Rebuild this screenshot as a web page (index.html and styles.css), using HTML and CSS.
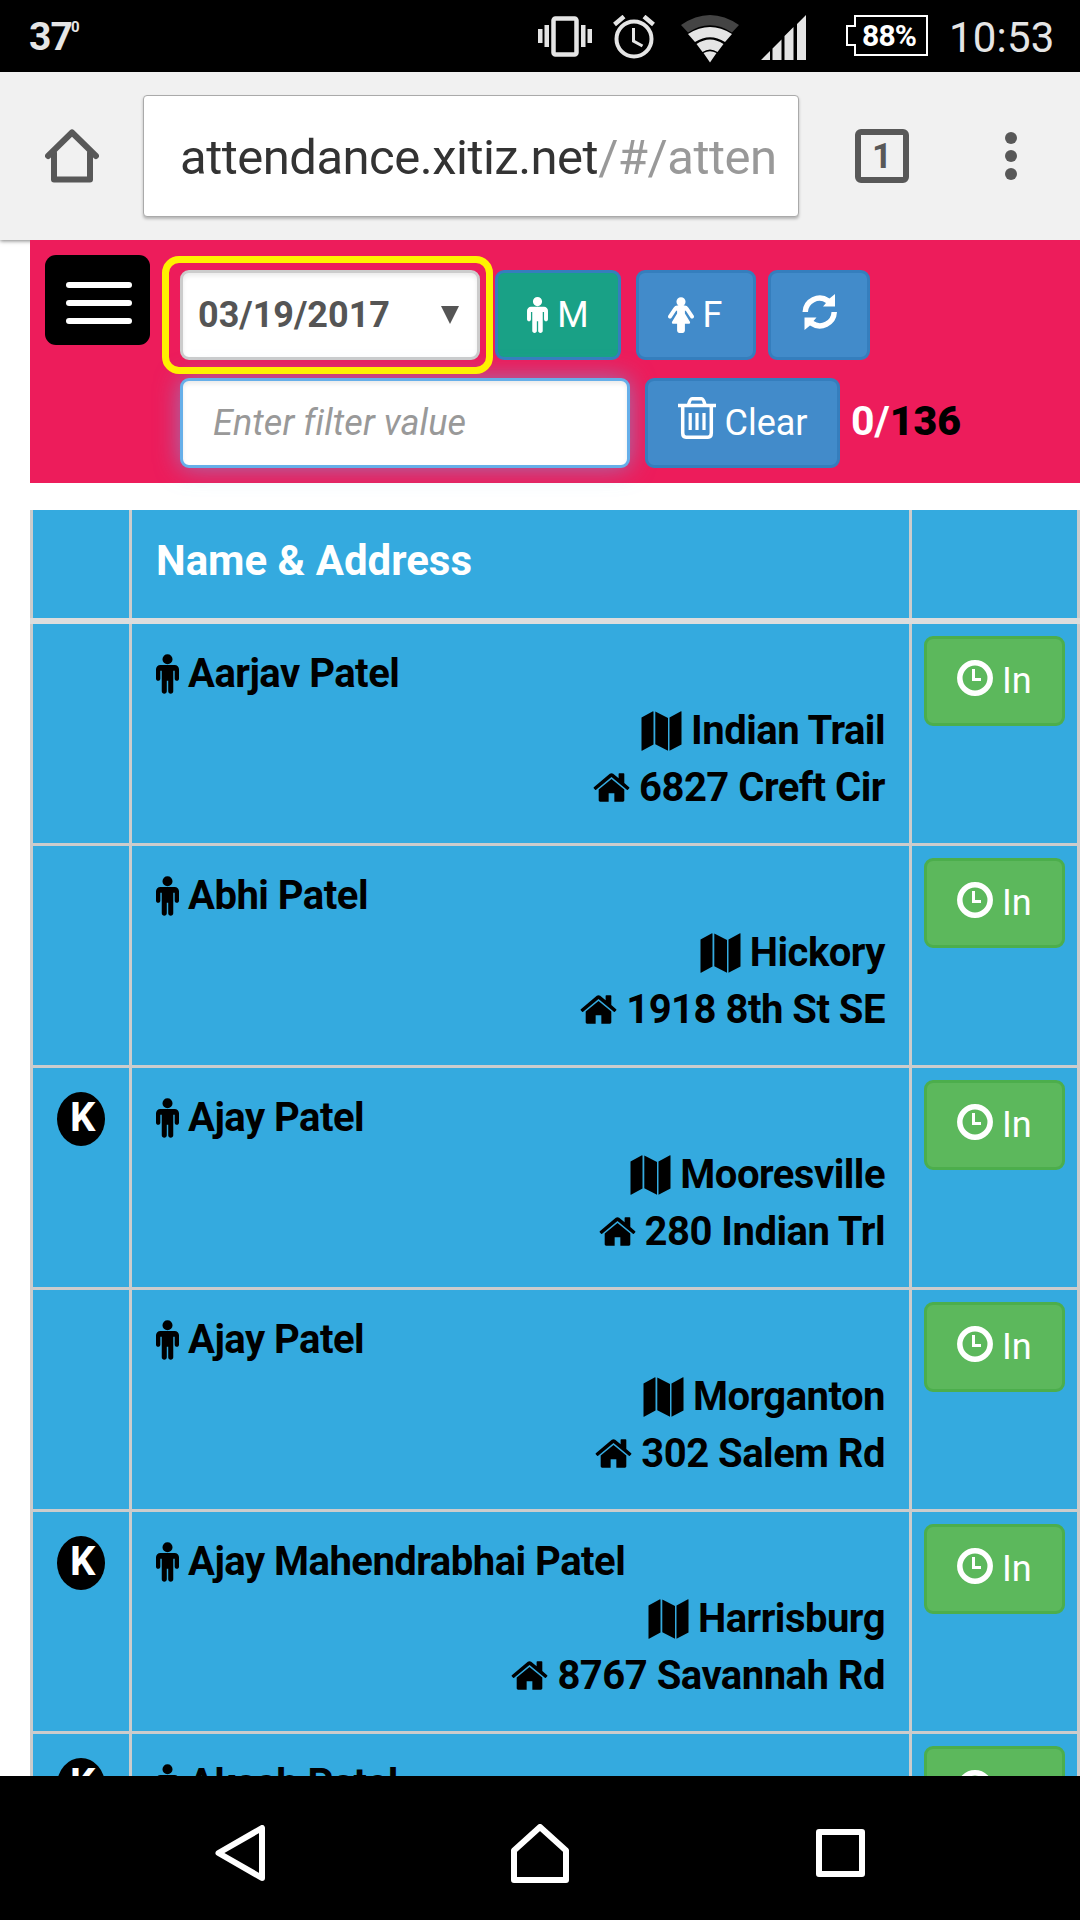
FILE: index.html
```html
<!DOCTYPE html>
<html lang="en">
<head>
<meta charset="utf-8">
<title>Attendance</title>
<link rel="stylesheet" href="styles.css">
</head>
<body>
<svg class="sprite" aria-hidden="true">
  <symbol id="male" viewBox="0 160 1024 1760"><path d="M1024 832v416q0 40-28 68t-68 28-68-28-28-68v-352h-64v912q0 46-33 79t-79 33-79-33-33-79v-464h-64v464q0 46-33 79t-79 33-79-33-33-79v-912h-64v352q0 40-28 68t-68 28-68-28-28-68v-416q0-80 56-136t136-56h640q80 0 136 56t56 136zm-288-448q0 93-65.500 158.500t-158.500 65.500-158.500-65.500-65.500-158.500 65.500-158.500 158.500-65.500 158.500 65.500 65.500 158.500z"/></symbol>
  <symbol id="female" viewBox="0 160 1280 1760"><path d="M1280 1120q0 40-28 68t-68 28q-51 0-80-43l-227-341h-45v132l247 411q9 15 9 33 0 26-19 45t-45 19h-192v336q0 46-33 79t-79 33h-160q-46 0-79-33t-33-79v-336h-192q-26 0-45-19t-19-45q0-18 9-33l247-411v-132h-45l-227 341q-29 43-80 43-40 0-68-28t-28-68q0-29 16-53l256-384q73-107 176-107h384q103 0 176 107l256 384q16 24 16 53zm-416-736q0 93-65.500 158.500t-158.500 65.500-158.500-65.500-65.500-158.500 65.500-158.500 158.500-65.500 158.500 65.500 65.500 158.500z"/></symbol>
  <symbol id="home" viewBox="0 253 1664 1283"><path d="M1408 992v480q0 26-19 45t-45 19h-384v-384h-256v384h-384q-26 0-45-19t-19-45v-480q0-1 .5-3t.5-3l575-474 575 474q1 2 1 6zm223-69l-62 74q-8 9-21 11h-3q-13 0-21-7l-692-577-692 577q-12 8-24 7-13-2-21-11l-62-74q-8-10-7-23.500t11-21.500l719-599q32-26 76-26t76 26l244 204v-195q0-14 9-23t23-9h192q14 0 23 9t9 23v408l219 182q10 8 11 21.500t-7 23.500z"/></symbol>
  <symbol id="map" viewBox="0 0 40 40"><path d="M0 6.500 11.500.3a.4.400 0 0 1 .5.4V33.500L.5 39.800a.4.400 0 0 1-.5-.4zM13.800.5 26.500 7V39.700L13.800 33.300zM28 6.500 39.500.2a.4.400 0 0 1 .5.4V33.500L28 39.800z"/></symbol>
  <symbol id="clock" viewBox="0 0 36 36"><circle cx="18" cy="18" r="15.200" fill="none" stroke="currentColor" stroke-width="5.500"/><path d="M15 9h3v9h6v3h-9z"/></symbol>
</svg>
<div class="screen">
  <header class="status">
    <span class="temp">37</span><span class="degree">0</span>
    <svg class="s-vibrate" width="54" height="42" viewBox="0 0 54 42" fill="#e5e5e5"><rect x="15.500" y="2.500" width="23" height="36" rx="2" fill="none" stroke="#e5e5e5" stroke-width="4.500"/><path d="M0 13h4.500v14H0zM6.500 9h4.500v22H6.500zM43 9h4.500v22H43zM49.500 13H54v14h-4.500z"/></svg>
    <svg class="s-alarm" width="42" height="44" viewBox="0 0 42 44" fill="none" stroke="#e5e5e5"><circle cx="21" cy="24" r="17.500" stroke-width="4"/><path d="M20.500 13v13l9 5" stroke-width="3"/><path d="M1.500 9.500 11 1.500M40.500 9.500 31 1.500" stroke-width="4.500"/></svg>
    <svg class="s-wifi" width="58" height="48" viewBox="0 0 58 48" fill="#e5e5e5"><path fill="#444" d="M0 10Q29-10 58 10L51 17.500Q29 3 7 17.500z"/><path d="M7 19Q29 5 51 19L44 27Q29 17.500 14 27zM15.500 29Q29 20 42.500 29L36.500 37Q29 32 21.500 37zM22.500 38Q29 34.500 35.500 38L29 47.500z"/></svg>
    <svg class="s-signal" width="45" height="45" viewBox="0 0 45 45" fill="#e5e5e5"><path d="M0 45 9 36v9zM11.500 33.500 20.500 24.500V45h-9zM23.500 21 32.500 12V45h-9zM36 9 45 0v45h-9z"/></svg>
    <span class="battery"><svg width="82" height="42" viewBox="0 0 82 42" fill="none" stroke="#fff" stroke-width="2"><path d="M9 1h72v39H9V30H1V11h8z"/></svg><b>88%</b></span>
    <span class="time">10:53</span>
  </header>

  <nav class="browser">
    <svg width="54" height="54" viewBox="0 0 54 54" fill="none" stroke="#585858" stroke-width="6" stroke-linejoin="round" stroke-linecap="round"><path d="M9 24V50.500H45V24"/><path d="M3 27 27 3.500 51 27"/></svg>
    <div class="url"><span class="url-text">attendance.xitiz.net<i>/#/atten</i></span></div>
    <span class="tabs">1</span>
    <span class="dots"><i></i><i></i><i></i></span>
  </nav>

  <main class="page">
    <section class="toolbar">
      <button class="menu"><i></i><i></i><i></i></button>
      <div class="controls">
        <div class="line">
          <div class="date"><span>03/19/2017</span><svg width="18" height="18" viewBox="0 0 18 18"><path d="M0 0h18L9 18z" fill="#555"/></svg></div>
          <button class="btn male"><svg width="21" height="36" class="icon"><use href="#male"/></svg>M</button>
          <button class="btn female"><svg width="26" height="36" class="icon"><use href="#female"/></svg>F</button>
          <button class="btn refresh"><svg width="36" height="36" viewBox="0 0 36 36" class="icon"><path d="M.5 18A17.300 17.300 0 0 1 27.500 4.500L33 0V12.500H21L24 9A11.500 11.500 0 0 0 6 18zM35 18A17.300 17.300 0 0 1 8 31.500L2.500 36V23.500H14.500L11.500 27A11.500 11.500 0 0 0 29.500 18z"/></svg></button>
        </div>
        <div class="line">
          <div class="filter">Enter filter value</div>
          <button class="btn clear"><svg width="38" height="42" viewBox="0 0 38 42" fill="none" stroke="#fff"><path d="M0 8.500h38" stroke-width="3.500"/><path d="M10.500 8Q12 1.800 14 1.800H23.500Q25.500 1.800 27 8M4.700 9V36Q4.700 40.200 8 40.200H30Q33.300 40.200 33.300 36V9" stroke-width="3.500"/><path d="M12.200 16v17M19 16v17M26 16v17" stroke-width="3.200"/></svg><span>Clear</span></button>
          <div class="count">0/<b>136</b></div>
        </div>
      </div>
      <div class="highlight"></div>
    </section>

    <section class="table">
      <div class="row head"><div></div><div class="title">Name &amp; Address</div><div></div></div>
      <div class="row">
        <div class="flag"></div>
        <div class="info"><p><svg class="icon person"><use href="#male"/></svg>Aarjav Patel</p><p class="r"><svg class="icon map"><use href="#map"/></svg>Indian Trail</p><p class="r"><svg class="icon home"><use href="#home"/></svg>6827 Creft Cir</p></div>
        <div class="act"><button class="in"><svg class="icon clock"><use href="#clock"/></svg>In</button></div>
      </div>
      <div class="row">
        <div class="flag"></div>
        <div class="info"><p><svg class="icon person"><use href="#male"/></svg>Abhi Patel</p><p class="r"><svg class="icon map"><use href="#map"/></svg>Hickory</p><p class="r"><svg class="icon home"><use href="#home"/></svg>1918 8th St SE</p></div>
        <div class="act"><button class="in"><svg class="icon clock"><use href="#clock"/></svg>In</button></div>
      </div>
      <div class="row">
        <div class="flag"><span class="badge">K</span></div>
        <div class="info"><p><svg class="icon person"><use href="#male"/></svg>Ajay Patel</p><p class="r"><svg class="icon map"><use href="#map"/></svg>Mooresville</p><p class="r"><svg class="icon home"><use href="#home"/></svg>280 Indian Trl</p></div>
        <div class="act"><button class="in"><svg class="icon clock"><use href="#clock"/></svg>In</button></div>
      </div>
      <div class="row">
        <div class="flag"></div>
        <div class="info"><p><svg class="icon person"><use href="#male"/></svg>Ajay Patel</p><p class="r"><svg class="icon map"><use href="#map"/></svg>Morganton</p><p class="r"><svg class="icon home"><use href="#home"/></svg>302 Salem Rd</p></div>
        <div class="act"><button class="in"><svg class="icon clock"><use href="#clock"/></svg>In</button></div>
      </div>
      <div class="row">
        <div class="flag"><span class="badge">K</span></div>
        <div class="info"><p><svg class="icon person"><use href="#male"/></svg>Ajay Mahendrabhai Patel</p><p class="r"><svg class="icon map"><use href="#map"/></svg>Harrisburg</p><p class="r"><svg class="icon home"><use href="#home"/></svg>8767 Savannah Rd</p></div>
        <div class="act"><button class="in"><svg class="icon clock"><use href="#clock"/></svg>In</button></div>
      </div>
      <div class="row">
        <div class="flag"><span class="badge">K</span></div>
        <div class="info"><p><svg class="icon person"><use href="#male"/></svg>Akash Patel</p></div>
        <div class="act"><button class="in"><svg class="icon clock"><use href="#clock"/></svg>In</button></div>
      </div>
    </section>
  </main>

  <footer class="softkeys">
    <svg width="50" height="56" viewBox="0 0 50 56"><path d="M47 3V53L3.500 28z"/></svg>
    <svg width="58" height="59" viewBox="0 0 58 59"><path d="M3 56V26.500L29 3 55 26.500V56z"/></svg>
    <svg width="49" height="48" viewBox="0 0 49 48"><path d="M3 3H46V45H3z"/></svg>
  </footer>
</div>
</body>
</html>
```
FILE: styles.css
```css
* { box-sizing: border-box; }
body { margin: 0; font-family: Roboto, sans-serif; background: #fff; }
p { margin: 0; }
svg { display: block; flex: none; }
button { font: inherit; padding: 0; border: 0; margin: 0; }
.sprite { position: absolute; width: 0; height: 0; }
.icon { fill: currentColor; }
.screen { width: 1080px; height: 1920px; display: flex; flex-direction: column; overflow: hidden; }

.status { height: 72px; flex: none; background: #000; color: #e5e5e5; display: flex; align-items: flex-start; }
.temp { margin: 13px 0 0 29px; width: 42px; font-size: 39px; line-height: 48px; font-weight: 700; letter-spacing: -1px; }
.degree { margin: 17px 0 0 0; width: 10px; font-size: 15px; line-height: 20px; font-weight: 700; }
.s-vibrate { margin: 16px 0 0 457px; }
.s-alarm { margin: 15px 0 0 21px; }
.s-wifi { margin: 15px 0 0 26px; }
.s-signal { margin: 15px 0 0 22px; }
.battery { margin: 15px 0 0 40px; width: 82px; height: 42px; display: grid; }
.battery svg, .battery b { grid-area: 1 / 1; }
.battery b { color: #fff; font-size: 30px; line-height: 42px; font-weight: 700; padding-left: 16px; letter-spacing: -.8px; }
.time { margin: 14px 0 0 21px; font-size: 42px; line-height: 48px; letter-spacing: .2px; }

.browser { height: 168px; flex: none; background: #f1f1f1; display: flex; align-items: center; padding: 0 0 0 45px; box-shadow: 0 1px 4px rgba(0,0,0,.5); position: relative; }
.url { margin-left: 44px; width: 656px; height: 122px; background: #fff; border: 1px solid #aaa; border-radius: 4px; box-shadow: 0 2px 3px rgba(0,0,0,.25); padding: 4px 24px 0 36px; display: flex; align-items: center; }
.url-text { width: 594px; overflow: hidden; white-space: nowrap; font-size: 49px; line-height: 76px; letter-spacing: -.5px; color: #333; }
.url-text i { font-style: normal; color: #999; }
.tabs { margin-left: 56px; width: 54px; height: 54px; border: 6px solid #585858; border-radius: 6px; color: #585858; font-size: 35px; line-height: 43px; font-weight: 700; text-align: center; }
.dots { margin-left: 96px; display: flex; flex-direction: column; gap: 6px; }
.dots i { width: 12px; height: 12px; border-radius: 50%; background: #585858; }

.page { flex: 1; min-height: 0; overflow: hidden; padding-left: 30px; }
.toolbar { position: relative; height: 243px; background: #ed1c5b; display: flex; }
.menu { margin: 15px 0 0 15px; width: 105px; height: 90px; border-radius: 11px; background: #000; display: flex; flex-direction: column; align-items: center; justify-content: center; gap: 12px; padding: 6px 0 0 2px; }
.menu i { width: 66px; height: 6px; border-radius: 3px; background: #fff; }
.controls { margin: 30px 0 0 30px; display: flex; flex-direction: column; gap: 18px; }
.line { display: flex; height: 90px; font-size: 36px; }
.date { width: 300px; background: #fff; border: 3px solid #ccc; border-radius: 9px; box-shadow: inset 0 3px 4px rgba(0,0,0,.08); color: #555; font-weight: 700; line-height: 84px; display: flex; align-items: center; justify-content: space-between; padding: 0 18px 0 15px; }
.btn { background: #428bca; border: 3px solid #357ebd; border-radius: 9px; color: #fff; display: flex; align-items: center; justify-content: center; gap: 9px; }
.male { margin-left: 15px; width: 126px; background: #19a186; }
.female { margin-left: 15px; width: 120px; padding-right: 2px; }
.refresh { margin-left: 12px; width: 102px; align-items: flex-start; padding: 21px 0 0 2px; }
.filter { width: 450px; background: #fff; border: 3px solid #66afe9; border-radius: 9px; box-shadow: inset 0 3px 4px rgba(0,0,0,.08), 0 0 24px rgba(102,175,233,.6); font-style: italic; color: #999; line-height: 84px; letter-spacing: .1px; padding-left: 30px; }
.clear { margin-left: 15px; width: 195px; align-items: flex-start; padding: 16px 0 0 1px; gap: 8px; }
.clear span { line-height: 52px; }
.count { margin-left: 11px; color: #fff; font-weight: 700; font-size: 41px; line-height: 86px; }
.count b { color: #000; }
.highlight { position: absolute; left: 132px; top: 16px; width: 331px; height: 118px; border: 7px solid #fff200; border-radius: 17px; }

.table { margin-top: 27px; background: #34aadf; border-left: 3px solid #ccc; border-right: 3px solid #ccc; }
.row { display: grid; grid-template-columns: 96px 780px 168px; height: 222px; border-bottom: 3px solid #ccc; }
.row > div + div { border-left: 3px solid #ccc; }
.head { height: 114px; border-bottom: 6px solid #ddd; margin: 0 -3px; padding: 0 3px; box-shadow: inset 3px 0 #ccc, inset -3px 0 #ccc; }
.title { color: #fff; font-size: 42px; font-weight: 700; line-height: 60px; padding: 21px 0 0 24px; }
.info { font-size: 40px; font-weight: 700; line-height: 57px; letter-spacing: -.5px; padding: 21px 24px 0 24px; color: #000; }
.info p { display: flex; align-items: center; height: 57px; gap: 9px; white-space: nowrap; }
.info .r { justify-content: flex-end; }
.person { width: 23px; height: 40px; }
.map { width: 41px; height: 40px; }
.home { width: 37px; height: 29px; }
.flag { padding: 24px 0 0 24px; }
.badge { display: block; width: 48px; height: 54px; border-radius: 50%; background: #000; color: #fff; font-size: 40px; font-weight: 700; line-height: 52px; padding-left: 13px; }
.act { padding: 12px; }
.in { width: 141px; height: 90px; border: 3px solid #4cae4c; border-radius: 9px; background: #5cb85c; color: #fff; font-size: 36px; display: flex; align-items: center; padding-left: 30px; gap: 9px; }
.clock { width: 36px; height: 36px; margin-top: -6px; }

.softkeys { height: 144px; flex: none; background: #000; display: flex; align-items: center; justify-content: flex-start; padding: 10px 0 0 215px; position: relative; }
.softkeys path { fill: none; stroke: #fff; stroke-width: 6; stroke-linejoin: round; }
.softkeys svg + svg { margin-left: 246px; }
.softkeys svg:last-child { margin-left: 247px; }
```
